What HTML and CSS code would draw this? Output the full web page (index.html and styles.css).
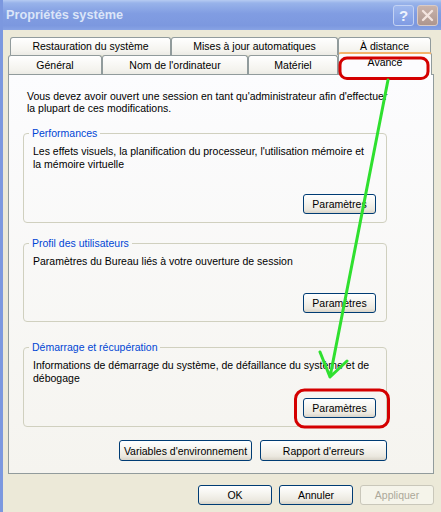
FILE: index.html
```html
<!DOCTYPE html>
<html lang="fr">
<head>
    <meta charset="UTF-8">
    <meta name="viewport" content="width=device-width, initial-scale=1.0">
    <title>Propriétés système</title>
    <link rel="stylesheet" href="styles.css">
</head>
<body>
    <div class="screen">
        <div class="window">
            <div class="titlebar">
                <span class="title">Propriétés système</span>
                <div class="title-buttons">
                    <span class="tbtn help">?</span>
                    <span class="tbtn close">
                        <svg width="13" height="13" viewBox="0 0 13 13">
                            <path d="M2 2 L11 11 M11 2 L2 11" stroke="#f3e4df" stroke-width="2.4" stroke-linecap="round"/>
                        </svg>
                    </span>
                </div>
            </div>

            <div class="client">
                <div class="tabs">
                    <div class="tab-row back">
                        <div class="tab w161">Restauration du système</div>
                        <div class="tab w167">Mises à jour automatiques</div>
                        <div class="tab w93">À distance</div>
                    </div>
                    <div class="tab-row front">
                        <div class="tab w94">Général</div>
                        <div class="tab w146">Nom de l'ordinateur</div>
                        <div class="tab w90">Matériel</div>
                        <div class="tab w94 selected">Avancé</div>
                    </div>
                </div>

                <div class="panel">
                    <p class="intro">Vous devez avoir ouvert une session en tant qu'administrateur afin d'effectuer<br>la plupart de ces modifications.</p>

                    <fieldset class="group">
                        <legend>Performances</legend>
                        <div class="group-body h69">
                            <p>Les effets visuels, la planification du processeur, l'utilisation mémoire et<br>la mémoire virtuelle</p>
                            <div class="group-actions"><button class="btn">Paramètres</button></div>
                        </div>
                    </fieldset>

                    <fieldset class="group gap14">
                        <legend>Profil des utilisateurs</legend>
                        <div class="group-body h58">
                            <p>Paramètres du Bureau liés à votre ouverture de session</p>
                            <div class="group-actions"><button class="btn">Paramètres</button></div>
                        </div>
                    </fieldset>

                    <fieldset class="group gap19">
                        <legend>Démarrage et récupération</legend>
                        <div class="group-body h59">
                            <p>Informations de démarrage du système, de défaillance du système et de<br>débogage</p>
                            <div class="group-actions"><button class="btn">Paramètres</button></div>
                        </div>
                    </fieldset>

                    <div class="panel-actions">
                        <button class="btn w133">Variables d'environnement</button>
                        <button class="btn w127">Rapport d'erreurs</button>
                    </div>
                </div>

                <div class="dialog-actions">
                    <button class="btn dlg">OK</button>
                    <button class="btn dlg">Annuler</button>
                    <button class="btn dlg" disabled>Appliquer</button>
                </div>
            </div>
        </div>

        <!-- annotations drawn over the screenshot -->
        <svg class="marks" width="441" height="512" viewBox="0 0 441 512">
            <rect x="340" y="58" width="88" height="20.5" rx="7" fill="none" stroke="#d40000" stroke-width="3"/>
            <rect x="295.5" y="390" width="93" height="37" rx="9" fill="none" stroke="#d40000" stroke-width="3"/>
            <path d="M388 80 L330 377 M320 352 L330 377 L347 361" fill="none" stroke="#2fe02f" stroke-width="3" stroke-linecap="round" stroke-linejoin="round"/>
        </svg>
    </div>
</body>
</html>
```

FILE: styles.css
```css
html, body {
    margin: 0;
    padding: 0;
    overflow: hidden;
}
body {
    background-color: #ece9d8;
    font-family: "Liberation Sans", Arial, sans-serif;
    font-size: 10.5px;
    color: #000000;
}
.screen {
    position: relative;
    width: 441px;
    height: 512px;
    overflow: hidden;
}
.window {
    width: 441px;
    height: 512px;
    box-sizing: border-box;
    border-left: 3px solid #7c98df;
    background-color: #ece9d8;
}
.titlebar {
    height: 30px;
    display: flex;
    align-items: center;
    justify-content: space-between;
    padding: 0 3px 0 3px;
    background: linear-gradient(180deg, #b6cbf2 0px, #98b3ea 3px, #819de2 45%, #7c98df 85%, #88a3e4 100%);
}
.title {
    font-weight: bold;
    font-size: 12.7px;
    color: #dbe5f8;
    padding-bottom: 1px;
}
.title-buttons {
    display: flex;
    gap: 3px;
}
.tbtn {
    width: 21px;
    height: 21px;
    box-sizing: border-box;
    border: 1px solid #c3d2f3;
    border-radius: 3px;
    display: flex;
    align-items: center;
    justify-content: center;
}
.help {
    background: linear-gradient(180deg, #9fb8ee, #7f9be3);
    color: #eef3fd;
    font-weight: bold;
    font-size: 15px;
}
.close {
    background: linear-gradient(180deg, #c9b3ab, #ad968f);
    border-color: #d9cbc6;
}

.client {
    padding: 7px 0 0 5px;
}
.tabs {
    display: flex;
    flex-direction: column;
}
.tab-row {
    display: flex;
    align-items: flex-end;
    height: 18px;
}
.tab-row.back {
    margin-left: 2px;
}
.tab-row.front {
    height: 19px;
}
.tab {
    box-sizing: border-box;
    flex-shrink: 0;
    height: 18px;
    border: 1px solid #919b9c;
    border-bottom: none;
    border-radius: 3px 3px 0 0;
    background: linear-gradient(180deg, #ffffff, #f4f3ee 75%, #ecebe5);
    text-align: center;
    line-height: 17px;
}
.tab-row.front .tab {
    height: 19px;
    line-height: 18px;
}
.tab-row.front .tab.selected {
    height: 23px;
    margin-bottom: -1px;
    line-height: 17px;
    background: #fcfcfe;
    border-top: 2px solid #f4b46c;
    position: relative;
    z-index: 1;
}
.w161 { width: 161px; }
.w167 { width: 167px; }
.w93 { width: 93px; }
.w94 { width: 94px; }
.w146 { width: 146px; }
.w90 { width: 90px; }

.panel {
    box-sizing: border-box;
    width: 426px;
    height: 400px;
    border: 1px solid #919b9c;
    background: linear-gradient(180deg, #fcfcfe, #f5f4ef);
    padding: 15px 0 0 14px;
}
.intro {
    margin: 0 0 13px 4px;
    line-height: 12px;
}
.group {
    box-sizing: border-box;
    width: 364px;
    margin: 0;
    padding: 6px 10px 8px 9px;
    border: 1px solid #d0d0bf;
    border-radius: 4px;
}
.group.gap14 { margin-top: 14px; }
.group.gap19 { margin-top: 19px; }
.group legend {
    color: #0046d5;
    line-height: 12px;
    padding: 0 3px;
    margin-left: -4px;
}
.group-body {
    display: flex;
    flex-direction: column;
}
.group-body p {
    margin: 0;
    line-height: 13px;
}
.h69 { height: 69px; }
.h58 { height: 58px; }
.h59 { height: 59px; }
.group-actions {
    margin-top: auto;
    display: flex;
    justify-content: flex-end;
}

.btn {
    -webkit-appearance: none;
    appearance: none;
    box-sizing: border-box;
    width: 73px;
    height: 20px;
    padding: 0;
    border: 1px solid #003c74;
    border-radius: 3px;
    background: linear-gradient(180deg, #ffffff, #f6f5f0 40%, #ebe8df 80%, #d8d3c8);
    font-family: "Liberation Sans", Arial, sans-serif;
    font-size: 10.5px;
    color: #000000;
}
.btn:disabled {
    border-color: #c9c7ba;
    background: #f5f4ea;
    color: #aca899;
}
.panel-actions {
    width: 364px;
    margin-top: 13px;
    display: flex;
    justify-content: flex-end;
    gap: 8px;
}
.panel-actions .btn {
    height: 21px;
}
.w133 { width: 133px; }
.w127 { width: 127px; }

.dialog-actions {
    width: 426px;
    margin-top: 11px;
    display: flex;
    justify-content: flex-end;
    gap: 7px;
}
.btn.dlg {
    width: 74px;
}

.marks {
    position: absolute;
    left: 0;
    top: 0;
    z-index: 2;
    pointer-events: none;
}
```
